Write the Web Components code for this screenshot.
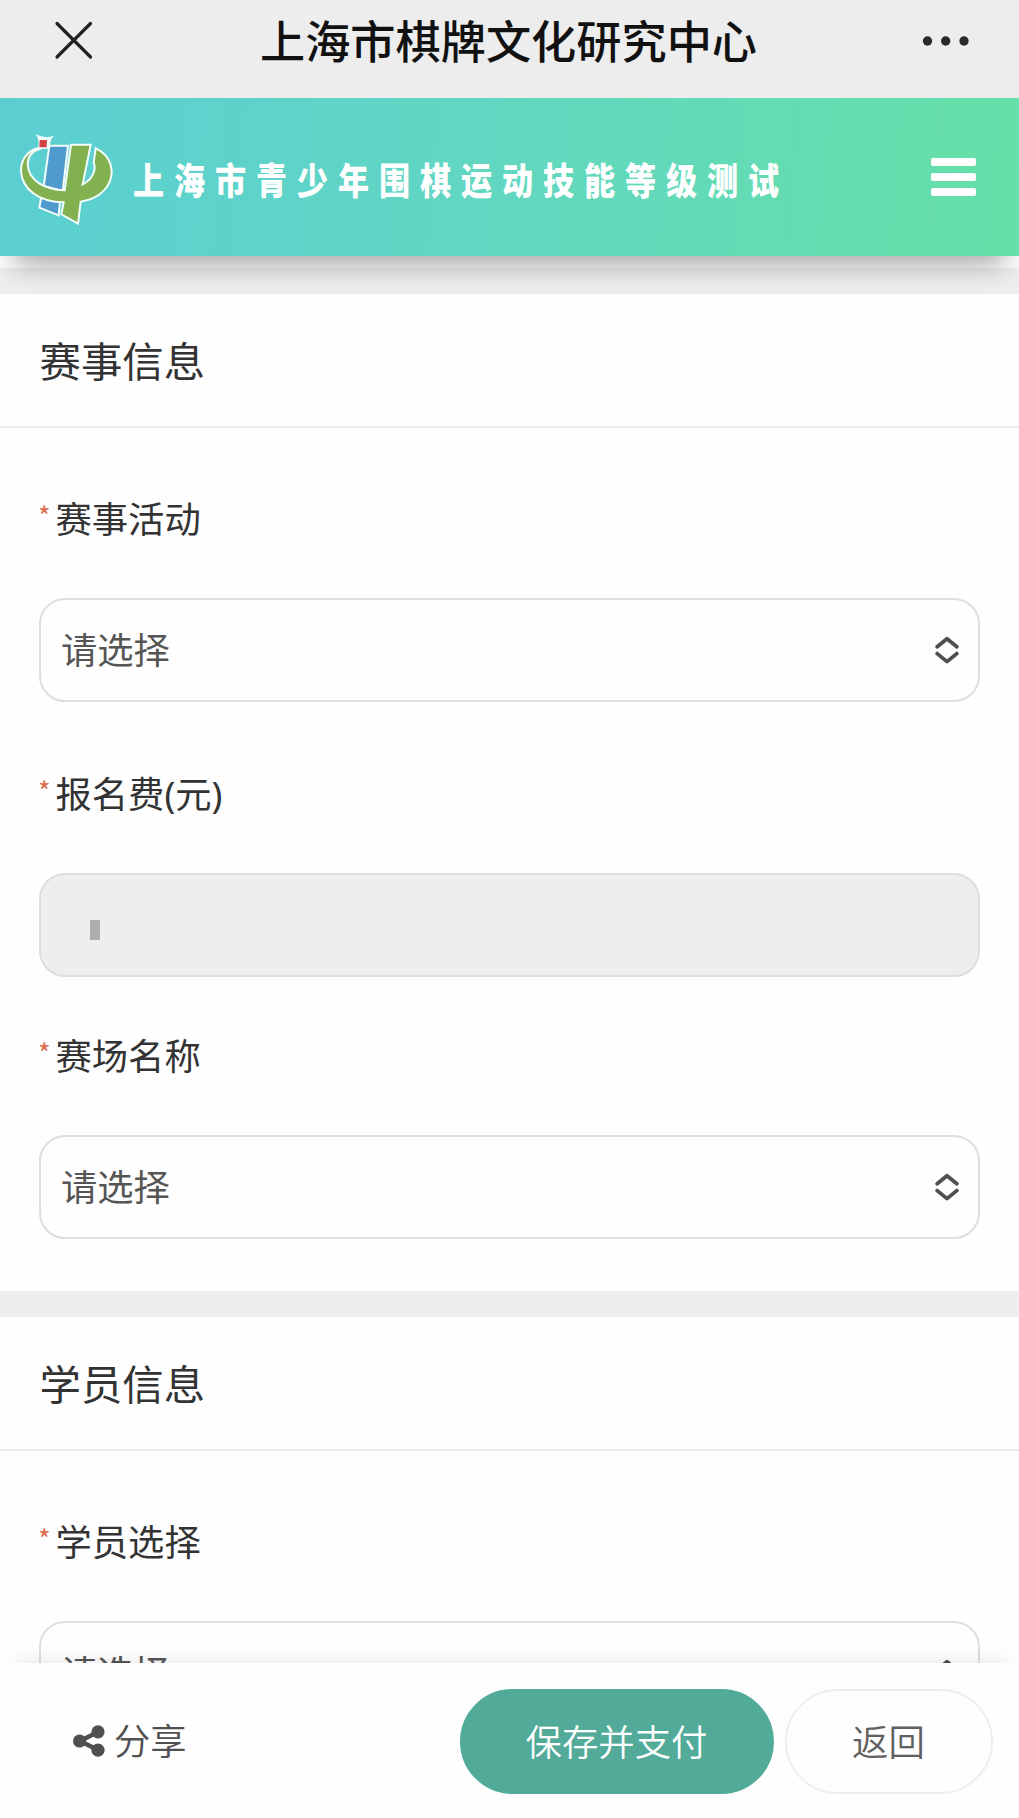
<!DOCTYPE html>
<html lang="zh-CN">
<head>
<meta charset="utf-8">
<meta name="viewport" content="width=device-width, initial-scale=1">
<title>上海市棋牌文化研究中心</title>
<style>
    html, body {
        margin: 0;
        height: 100%;
        overflow: hidden;
    }
    body {
        background: #fefefe;
        color: #333;
        font-family: "Noto Sans CJK SC", "Liberation Sans", sans-serif;
    }
</style>
</head>
<body>
<signup-page>
    <nav-bar slot="top">上海市棋牌文化研究中心</nav-bar>
    <site-banner slot="top">上海市青少年围棋运动技能等级测试</site-banner>

    <form-section heading="赛事信息">
        <form-field label="赛事活动"><select-box>请选择</select-box></form-field>
        <form-field label="报名费(元)"><readonly-box></readonly-box></form-field>
        <form-field label="赛场名称" compact><select-box>请选择</select-box></form-field>
    </form-section>
    <form-section heading="学员信息">
        <form-field label="学员选择"><select-box>请选择</select-box></form-field>
    </form-section>

    <action-bar slot="bottom">
        <share-link slot="start">分享</share-link>
        <pill-button variant="primary">保存并支付</pill-button>
        <pill-button>返回</pill-button>
    </action-bar>
</signup-page>

<script>
class SignupPage extends HTMLElement {
    connectedCallback() {
        this.attachShadow({ mode: 'open' });
        this.shadowRoot.innerHTML = `
            <style>
                :host {
                    display: flex;
                    flex-direction: column;
                    height: 100vh;
                }
                header, footer {
                    flex: none;
                    position: relative;
                    z-index: 1;
                }
                main {
                    flex: 1;
                    min-height: 0;
                    overflow: hidden;
                    padding-top: 12.5px;
                }
            </style>
            <header><slot name="top"></slot></header>
            <main><slot></slot></main>
            <footer><slot name="bottom"></slot></footer>
        `;
    }
}

class NavBar extends HTMLElement {
    connectedCallback() {
        this.attachShadow({ mode: 'open' });
        this.shadowRoot.innerHTML = `
            <style>
                :host {
                    display: flex;
                    align-items: flex-start;
                    justify-content: space-between;
                    box-sizing: border-box;
                    height: 98px;
                    padding: 20px 48px 0 54px;
                    background: #ededed;
                    color: #111;
                }
                .title {
                    padding-left: 2px;
                    font-size: 45.2px;
                    font-weight: 500;
                    line-height: 39px;
                    white-space: nowrap;
                }
                svg {
                    display: block;
                }
            </style>
            <svg width="40" height="40" viewBox="0 0 40 40" fill="none" stroke="#222" stroke-width="3.2" stroke-linecap="round">
                <path d="M3 3.5 36.5 37M36.5 3.5 3 37"/>
            </svg>
            <span class="title"><slot></slot></span>
            <svg width="50" height="40" viewBox="0 0 50 40" fill="#2a2a2a">
                <circle cx="6.5" cy="21" r="4.7"/>
                <circle cx="24.7" cy="21" r="4.7"/>
                <circle cx="43" cy="21" r="4.7"/>
            </svg>
        `;
    }
}

class SiteBanner extends HTMLElement {
    connectedCallback() {
        this.attachShadow({ mode: 'open' });
        this.shadowRoot.innerHTML = `
            <style>
                :host {
                    display: flex;
                    align-items: flex-start;
                    box-sizing: border-box;
                    height: 157.5px;
                    padding: 34px 43.5px 0 18px;
                    background: linear-gradient(95deg, #5bced2 0%, #61d6c2 45%, #66e0a8 100%);
                    box-shadow: 0 22px 26px -14px rgba(0, 0, 0, .36);
                    color: #fff;
                }
                .logo {
                    flex: none;
                }
                /* condensed heavy lettering */
                .title {
                    flex: none;
                    width: 780px;
                    margin: 23px 0 0 18.5px;
                    font-size: 37px;
                    font-weight: 900;
                    line-height: 49px;
                    letter-spacing: 11.8px;
                    white-space: nowrap;
                    transform: scaleX(.84);
                    transform-origin: 0 50%;
                }
                .menu {
                    display: flex;
                    flex-direction: column;
                    gap: 7.5px;
                    width: 45px;
                    margin: 26px 0 0 auto;
                }
                .menu i {
                    height: 7.5px;
                    border-radius: 2px;
                    background: #fff;
                }
            </style>
            <svg class="logo" width="96.7" height="94" viewBox="54 36 290 282" stroke="#f4fcfa" stroke-width="6">
                <path fill="#4f9bcd" d="M148 77H204L188 213 131 198Z"/>
                <path fill="#4f9bcd" d="M123 234 180 244 176 286 118 263Z"/>
                <path fill="#82b250" d="M116 84C80 92 62 122 63 154C66 208 118 246 191 247L184 283 234 311 242 245C300 236 336 198 335 153C333 122 314 98 287 85L281 128C290 148 278 178 248 193L272 74H213L194 211C136 208 85 184 83 132C84 106 98 92 120 86Z"/>
                <path fill="#f4fcfa" stroke="none" d="M107 42Q134 58 162 47Q148 60 149 86H114Q120 60 107 42Z"/>
                <path fill="#d24545" stroke="none" d="M119 60H141L140 82H118Z"/>
            </svg>
            <span class="title"><slot></slot></span>
            <div class="menu"><i></i><i></i><i></i></div>
        `;
    }
}

class FormSection extends HTMLElement {
    connectedCallback() {
        const heading = this.getAttribute('heading');

        this.attachShadow({ mode: 'open' });
        this.shadowRoot.innerHTML = `
            <style>
                :host {
                    display: block;
                    padding-bottom: 52px;
                    border-top: 26px solid #eee;
                }
                h2 {
                    margin: 0;
                    padding: 0 39.5px 2px;
                    border-bottom: 2px solid #eee;
                    color: #333;
                    font-size: 41.4px;
                    font-weight: 400;
                    line-height: 130px;
                }
                .fields {
                    padding: 0 39px;
                }
            </style>
            <h2>${heading}</h2>
            <div class="fields"><slot></slot></div>
        `;
    }
}

class FormField extends HTMLElement {
    connectedCallback() {
        const label = this.getAttribute('label');

        this.attachShadow({ mode: 'open' });
        this.shadowRoot.innerHTML = `
            <style>
                :host {
                    display: block;
                    padding-top: 15px;
                }
                :host(:first-child) {
                    padding-top: 14px;
                }
                :host([compact]) {
                    padding-top: 2px;
                }
                label {
                    display: flex;
                    height: 156px;
                    color: #333;
                    font-family: "Noto Sans", "Noto Sans CJK SC", sans-serif;
                    font-size: 36.3px;
                    line-height: 155px;
                }
                .required {
                    width: 16.5px;
                    color: #dc6b4c;
                    font-family: "Noto Sans CJK SC", sans-serif;
                    font-size: 27px;
                    line-height: 148px;
                    text-indent: -1px;
                }
            </style>
            <label><span class="required">*</span><span>${label}</span></label>
            <slot></slot>
        `;
    }
}

class SelectBox extends HTMLElement {
    connectedCallback() {
        this.attachShadow({ mode: 'open' });
        this.shadowRoot.innerHTML = `
            <style>
                :host {
                    display: flex;
                    align-items: center;
                    justify-content: space-between;
                    box-sizing: border-box;
                    height: 104px;
                    padding: 0 19px 0 20px;
                    border: 2.5px solid #dedede;
                    border-radius: 26px;
                    color: #555;
                    font-size: 36.3px;
                    line-height: 96px;
                }
                span {
                    height: 100px;
                }
            </style>
            <span><slot></slot></span>
            <svg width="24" height="28" viewBox="0 0 24 28" fill="none" stroke="#505050" stroke-width="3.8" stroke-linecap="round" stroke-linejoin="round">
                <path d="M2.2 10.8 12 2.8 21.8 10.8M2.2 17.6 12 25.6 21.8 17.6"/>
            </svg>
        `;
    }
}

class ReadonlyBox extends HTMLElement {
    connectedCallback() {
        this.attachShadow({ mode: 'open' });
        this.shadowRoot.innerHTML = `
            <style>
                :host {
                    display: block;
                    box-sizing: border-box;
                    height: 104px;
                    padding: 45px 49px 0;
                    border: 2px solid #dedede;
                    border-radius: 26px;
                    background: #eee;
                }
                .value {
                    width: 10px;
                    height: 20px;
                    background: #adadad;
                }
            </style>
            <div class="value"></div>
        `;
    }
}

class ActionBar extends HTMLElement {
    connectedCallback() {
        this.attachShadow({ mode: 'open' });
        this.shadowRoot.innerHTML = `
            <style>
                :host {
                    display: flex;
                    justify-content: space-between;
                    box-sizing: border-box;
                    height: 155px;
                    padding: 26px 26.5px 0 72px;
                    background: #fefefe;
                    box-shadow: 0 -12px 20px -14px rgba(0, 0, 0, .13);
                }
                .buttons {
                    display: flex;
                    gap: 11px;
                }
            </style>
            <slot name="start"></slot>
            <div class="buttons"><slot></slot></div>
        `;
    }
}

class ShareLink extends HTMLElement {
    connectedCallback() {
        this.attachShadow({ mode: 'open' });
        this.shadowRoot.innerHTML = `
            <style>
                :host {
                    display: flex;
                    align-items: center;
                    gap: 7px;
                    height: 104px;
                    color: #505050;
                    font-size: 36.3px;
                    font-weight: 350;
                    line-height: 100px;
                }
                span {
                    height: 104px;
                }
            </style>
            <svg width="35" height="34" viewBox="0 0 35 34" fill="#505050" stroke="#505050">
                <path d="M26 8 8 17 26 26" fill="none" stroke-width="4.6"/>
                <circle cx="7.6" cy="17" r="6.6" stroke="none"/>
                <circle cx="26" cy="7.8" r="6.6" stroke="none"/>
                <circle cx="26" cy="26.2" r="6.6" stroke="none"/>
            </svg>
            <span><slot></slot></span>
        `;
    }
}

class PillButton extends HTMLElement {
    connectedCallback() {
        this.attachShadow({ mode: 'open' });
        this.shadowRoot.innerHTML = `
            <style>
                button {
                    box-sizing: border-box;
                    width: 208px;
                    height: 104.5px;
                    padding: 0 0 3px;
                    border: 2px solid #eee;
                    border-radius: 53px;
                    background: #fefefe;
                    color: #606060;
                    font-family: inherit;
                    font-size: 36.4px;
                    font-weight: 350;
                    line-height: 96px;
                }
                :host([variant="primary"]) button {
                    width: 314px;
                    border-color: #51ab98;
                    background: #51ab98;
                    color: #fff;
                }
            </style>
            <button type="button"><slot></slot></button>
        `;
    }
}

customElements.define('signup-page', SignupPage);
customElements.define('nav-bar', NavBar);
customElements.define('site-banner', SiteBanner);
customElements.define('form-section', FormSection);
customElements.define('form-field', FormField);
customElements.define('select-box', SelectBox);
customElements.define('readonly-box', ReadonlyBox);
customElements.define('action-bar', ActionBar);
customElements.define('share-link', ShareLink);
customElements.define('pill-button', PillButton);
</script>
</body>
</html>
